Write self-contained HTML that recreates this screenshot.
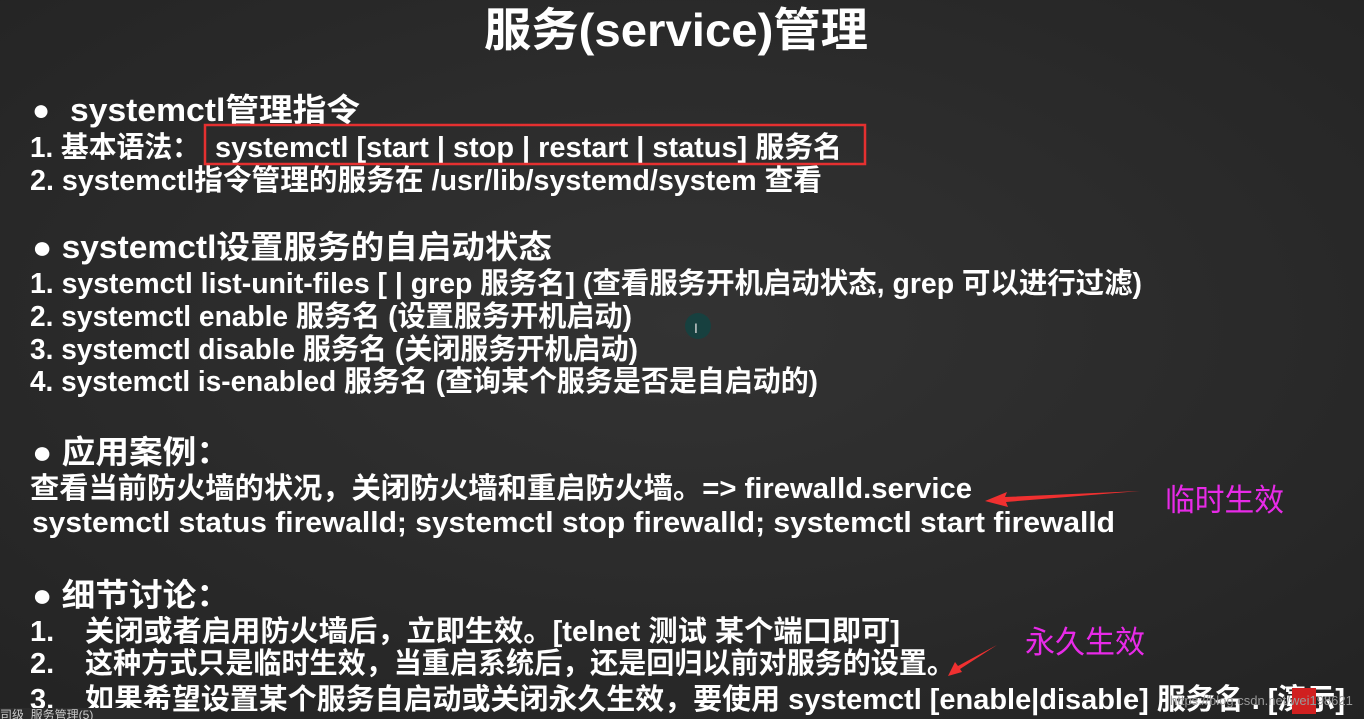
<!DOCTYPE html>
<html><head><meta charset="utf-8"><style>
html,body{margin:0;padding:0;background:#2b2b2b;overflow:hidden}
svg{display:block}
text{font-family:"Liberation Sans","Noto Sans CJK SC",sans-serif;font-weight:bold;fill:#fff}
.m{fill:#e82ae8;font-weight:normal}
</style></head><body>
<svg width="1364" height="719" viewBox="0 0 1364 719" xmlns="http://www.w3.org/2000/svg">
<defs><radialGradient id="bg" cx="50%" cy="45%" r="75%"><stop offset="0" stop-color="#333"/><stop offset="1" stop-color="#232323"/></radialGradient></defs>
<rect width="1364" height="719" fill="url(#bg)"/>
<text x="484" y="46" font-size="46" textLength="384" lengthAdjust="spacingAndGlyphs">服务(service)管理</text>
<g font-size="29">
<text x="32" y="120" font-size="30">●</text>
<text x="70" y="121" font-size="32" textLength="290" lengthAdjust="spacingAndGlyphs">systemctl管理指令</text>
<text x="30" y="157" textLength="170" lengthAdjust="spacingAndGlyphs">1. 基本语法：</text>
<text x="215" y="157" textLength="627" lengthAdjust="spacingAndGlyphs">systemctl  [start | stop | restart | status] 服务名</text>
<text x="30" y="190" textLength="792" lengthAdjust="spacingAndGlyphs">2. systemctl指令管理的服务在 /usr/lib/systemd/system 查看</text>
<text x="32" y="258" font-size="32" textLength="520" lengthAdjust="spacingAndGlyphs">● systemctl设置服务的自启动状态</text>
<text x="30" y="293" textLength="1112" lengthAdjust="spacingAndGlyphs">1. systemctl list-unit-files  [ | grep 服务名] (查看服务开机启动状态, grep 可以进行过滤)</text>
<text x="30" y="326" textLength="602" lengthAdjust="spacingAndGlyphs">2. systemctl enable 服务名 (设置服务开机启动)</text>
<text x="30" y="359" textLength="608" lengthAdjust="spacingAndGlyphs">3. systemctl disable 服务名 (关闭服务开机启动)</text>
<text x="30" y="391" textLength="788" lengthAdjust="spacingAndGlyphs">4. systemctl is-enabled 服务名 (查询某个服务是否是自启动的)</text>
<text x="32" y="463" font-size="32" textLength="198" lengthAdjust="spacingAndGlyphs">●  应用案例：</text>
<text x="30" y="498" textLength="942" lengthAdjust="spacingAndGlyphs">查看当前防火墙的状况，关闭防火墙和重启防火墙。=> firewalld.service</text>
<text x="32" y="532" textLength="1083" lengthAdjust="spacingAndGlyphs">systemctl status firewalld; systemctl stop firewalld; systemctl start firewalld</text>
<text x="32" y="606" font-size="32" textLength="198" lengthAdjust="spacingAndGlyphs">●  细节讨论：</text>
<text x="30" y="641">1.</text>
<text x="85" y="641" textLength="815" lengthAdjust="spacingAndGlyphs">关闭或者启用防火墙后，立即生效。[telnet 测试  某个端口即可]</text>
<text x="30" y="673">2.</text>
<text x="85" y="673" textLength="870" lengthAdjust="spacingAndGlyphs">这种方式只是临时生效，当重启系统后，还是回归以前对服务的设置。</text>
<text x="30" y="709">3.</text>
<text x="85" y="709" textLength="1260" lengthAdjust="spacingAndGlyphs">如果希望设置某个服务自启动或关闭永久生效，要使用 systemctl  [enable|disable] 服务名 . [演示]</text>
</g>
<rect x="205" y="125" width="660" height="39" fill="none" stroke="#e53030" stroke-width="2.5"/>
<text class="m" x="1165" y="511" font-size="31" textLength="119" lengthAdjust="spacingAndGlyphs">临时生效</text>
<text class="m" x="1025" y="653" font-size="31" textLength="120" lengthAdjust="spacingAndGlyphs">永久生效</text>
<polygon points="1140,491 1005,497 1007,492 985,501 1008,507 1006,502" fill="#f03030"/>
<polygon points="997,645 958,666 955,662 948,676 962,672 960,669" fill="#f03030"/>
<rect x="1292" y="688" width="24" height="26" fill="#d02020"/>
<circle cx="698" cy="326" r="13" fill="#17403f"/>
<text x="694" y="333" font-size="14" style="font-weight:normal;fill:#ddd">I</text>
<text x="1170" y="705" font-size="13" style="font-weight:normal;fill:#9a9a9a">https://blog.csdn.net/wei198621</text>
<rect x="0" y="708" width="160" height="11" fill="#2b2b2b"/>
<text x="0" y="719" font-size="12" style="font-weight:normal;fill:#ccc">司级_服务管理(5)</text>
</svg>
</body></html>
